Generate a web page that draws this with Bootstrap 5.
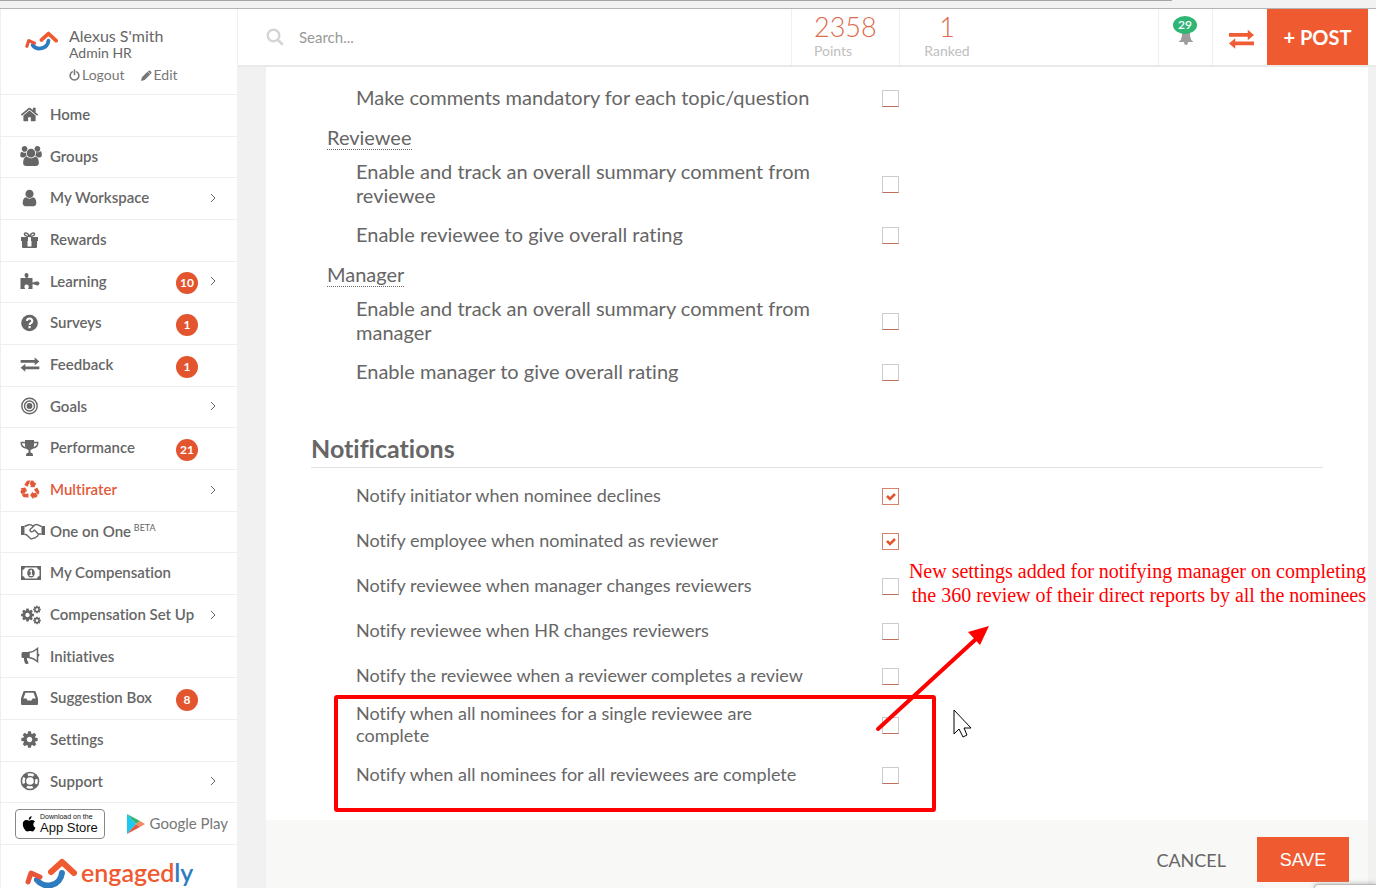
<!DOCTYPE html>
<html lang="en">
<head>
<meta charset="utf-8">
<meta name="viewport" content="width=device-width, initial-scale=1">
<title>Engagedly - Multirater settings</title>
<link href="https://cdn.jsdelivr.net/npm/bootstrap@5.3.0/dist/css/bootstrap.min.css" rel="stylesheet">
<style>
  :root { --brand: #f05a30; --ink: #666; --line: #efefef; }
  body { font-family: Lato, "Liberation Sans", sans-serif; color: var(--ink); background: #f1f1f1; font-size: 15px; font-variant-ligatures: none; }
  a { color: inherit; text-decoration: none; }
  svg { display: block; flex: none; }

  .app-shell { height: 100vh; }
  .window-edge { height: 9px; flex: none; background: #f2f2f2; border-top: 1px solid #a5a5a5; border-bottom: 1px solid #b4b4b4; }
  .window-edge span { display: block; width: 204px; height: 1px; margin: -1px 0 0 auto; background: #f2f2f2; }

  .side { width: 237px; flex: none; background: #fff; border-left: 1px solid var(--line); }
  .profile { height: 85px; padding: 17px 0 0 24px; gap: 11px; }
  .profile > svg { margin-top: 3px; }
  .profile-name { font-size: 16px; line-height: 20px; }
  .profile-role { font-size: 14px; line-height: 14px; }
  .profile-links { font-size: 14px; line-height: 18px; margin-top: 6px; gap: 16px; color: #777; }
  .profile-links a { gap: 2px; }
  .menu { border-top: 1px solid var(--line); }
  .menu li { height: 42px; border-bottom: 1px solid var(--line); }
  .menu li:nth-child(3n+2) { height: 41px; }
  .menu a { height: 100%; padding: 0 20px 2px 19px; font-weight: 600; }
  .menu a.current { color: #e2593a; }
  .menu-icon { width: 30px; flex: none; }
  .menu-icon svg { fill: currentColor; }
  .menu sup { font-size: 9px; font-weight: 400; top: -6px; margin-left: -1px; }
  .count { width: 22px; height: 22px; border-radius: 50%; background: #e2552f; color: #fff; font-size: 12px; line-height: 22px; text-align: center; font-weight: 700; margin: 4px 19px 0 auto; }
  .count.with-chev { margin-right: 11px; }
  .stores { height: 42px; border-bottom: 1px solid var(--line); padding: 0 9px 0 14px; }
  .apple-store { width: 90px; height: 30px; border: 1px solid #888; border-radius: 4px; padding-left: 6px; gap: 4px; color: #111; font-family: "Liberation Sans", Arial, sans-serif; }
  .apple-store small { display: block; font-size: 7px; line-height: 8px; }
  .apple-store b { display: block; font-size: 13px; line-height: 13px; font-weight: 400; }
  .play-store { font-size: 15px; color: #777; gap: 4px; }
  .brand-logo { padding: 12px 0 0 24px; gap: 4px; color: var(--brand); }
  .brand-logo .word { font-size: 25px; line-height: 30px; font-weight: 600; }
  .brand-logo i { font-style: normal; color: #2e7cc0; }

  .topbar { height: 58px; flex: none; background: #fff; border-bottom: 2px solid #e9e9e9; border-left: 1px solid var(--line); }
  .search { padding-left: 28px; gap: 14px; }
  .search input { border: 0; outline: 0; background: none; font-size: 15px; color: #777; width: 300px; padding: 0 1px; }
  .search input::placeholder { color: #999; opacity: 1; }
  .stat { border-left: 1px solid var(--line); padding: 1px 0 0 22px; width: 108px; color: #c0c0c0; font-size: 14px; line-height: 16px; }
  .stat strong { display: block; font-weight: 300; font-size: 27px; line-height: 33px; color: #dd6a4c; }
  .stat.rank { width: 259px; }
  .stat.rank div { width: 50px; text-align: center; }
  .tool { width: 54px; border: 0; border-left: 1px solid var(--line); background: none; padding: 0; }
  .tool.swap { width: 55px; }
  .bell-count { left: 14px; top: 7px; width: 24px; height: 18px; border-radius: 50%; background: #2fb574; color: #fff; font-size: 12px; line-height: 18px; font-weight: 600; }
  .post { width: 101px; margin-right: 8px; border: 0; border-radius: 0; background: var(--brand); color: #fff; font-size: 20px; font-weight: 700; }

  .panel { margin: 0 8px 0 29px; background: #fff; }
  .panel-main { padding: 11px 45px 22px; }
  .topic-row { padding: 7px 0 8px 45px; font-size: 20px; line-height: 24px; }
  .group-title { padding: 8px 0 3px 16px; font-size: 20px; line-height: 24px; font-weight: 400; margin: 0; }
  .group-title span { border-bottom: 1px dotted #666; }
  .opt-label { width: 462px; margin-right: 64px; }
  .tick { appearance: none; flex: none; width: 17px; height: 17px; margin: 2px 0 0; border: 1px solid #ccc; border-bottom: 1px solid #b9705c; border-radius: 0; background: #fff; }
  .tick:checked { border-color: #d9806a; background: url("data:image/svg+xml,%3Csvg xmlns='http://www.w3.org/2000/svg' viewBox='0 0 15 15'%3E%3Cpath d='M4 7l3 3 5-5' fill='none' stroke='%23e0562f' stroke-width='2.6'/%3E%3C/svg%3E"); }
  .notify-title { margin: 41px 0 6px; padding-bottom: 3px; border-bottom: 1px solid #e0e0e0; font-size: 25px; line-height: 32px; font-weight: 700; font-variant-ligatures: none; }
  .notify-row { min-height: 45px; padding: 3px 0 4px 45px; font-size: 18px; line-height: 22px; }
  .notify-row .opt-label { padding-bottom: 3px; }
  .notify-row .tick { margin-top: 0; }
  .panel-foot { background: #f8f8f6; padding: 17px 19px 40px; gap: 31px; }
  .panel-foot .btn { border: 0; border-radius: 0; font-size: 18px; line-height: 24px; padding: 0; }
  .panel-foot .cancel { color: var(--ink); }
  .panel-foot .save { width: 92px; height: 45px; background: var(--brand); color: #fff; font-family: "Liberation Sans", Arial, sans-serif; }

  .marks { left: 68px; top: 500px; color: #f00; }
  .remark { right: 2px; top: 492px; color: #f00; font-family: "Liberation Serif", "Times New Roman", serif; font-size: 20px; line-height: 24px; text-align: right; }
  .tray { right: 0; bottom: 0; width: 62px; height: 4px; background: #fff; border: 1px solid #bbb; border-width: 1px 0 0 1px; border-radius: 4px 0 0 0; box-shadow: 0 0 5px #aaa; }
</style>
</head>
<body>
<svg width="0" height="0" class="position-absolute" aria-hidden="true">
  <symbol id="gear" viewBox="0 0 1792 1792"><path d="M1152 896q0-106-75-181t-181-75-181 75-75 181 75 181 181 75 181-75 75-181zm512-109v222q0 12-8 23t-20 13l-185 28q-19 54-39 91 35 50 107 138 10 12 10 25t-9 23q-27 37-99 108t-94 71q-12 0-26-9l-138-108q-44 23-91 38-16 136-29 186-7 28-36 28h-222q-14 0-24.5-8.5t-11.5-21.5l-28-184q-49-16-90-37l-141 107q-10 9-25 9-14 0-25-11-126-114-165-168-7-10-7-23 0-12 8-23 15-21 51-66.5t54-70.5q-27-50-41-99l-183-27q-13-2-21-12.500t-8-23.500v-222q0-12 8-23t19-13l186-28q14-46 39-92-40-57-107-138-10-12-10-24 0-10 9-23 26-36 98.500-107.500t94.500-71.500q13 0 26 10l138 107q44-23 91-38 16-136 29-186 7-28 36-28h222q14 0 24.500 8.500t11.500 21.500l28 184q49 16 90 37l142-107q9-9 24-9 13 0 25 10 129 119 165 170 7 8 7 22 0 12-8 23-15 21-51 66.500t-54 70.500q26 50 41 98l183 28q13 2 21 12.500t8 23.500z"/></symbol>
  <symbol id="swap" viewBox="0 0 20 16"><path d="M0 3.200h15V.5l5 4.200-5 4.200V6.200H0zM20 13H5v2.700L0 11.500l5-4.200V10h15z"/></symbol>
  <symbol id="swoosh" viewBox="0 0 52 34"><g fill="none" stroke-linecap="round" stroke-linejoin="round"><path d="M12 22a14 14 0 0 0 25-7" stroke="#2e7cc0" stroke-width="6"/><path d="M26 14L37 4l12 11" stroke="#f05a30" stroke-width="6"/><path d="M3 24l3-9 9 4" stroke="#e8553a" stroke-width="5"/></g></symbol>
  <symbol id="chev" viewBox="0 0 8 10"><path d="M2 1l4 4-4 4" fill="none" stroke="#666" stroke-width="1"/></symbol>
  <symbol id="arm" viewBox="0 0 20 20"><path d="M4 5.200L6.300 1.500Q7 .6 8 .6h2.400L7.500 7.200zM11.200 .6h1.300q1 0 1.600.9l1.200 2 1.500-.9-2 5-5.100-.3 1.500-.9-1.700-2.800z"/></symbol>
</svg>

<div class="app-shell d-flex flex-column overflow-hidden position-relative">
  <div class="window-edge"><span></span></div>
  <div class="d-flex flex-grow-1 overflow-hidden">

    <aside class="side overflow-hidden">
      <div class="profile d-flex">
        <svg width="33" height="27" viewBox="0 0 52 42"><use href="#swoosh" width="52" height="34" y="3"/></svg>
        <div>
          <div class="profile-name">Alexus S'mith</div>
          <div class="profile-role">Admin HR</div>
          <div class="profile-links d-flex">
            <a href="#" class="d-flex align-items-center"><svg width="11" height="12" viewBox="0 0 12 13" fill="none" stroke="currentColor" stroke-width="1.700" stroke-linecap="round"><path d="M3.500 3a4.800 4.800 0 1 0 5 0M6 1v5"/></svg>Logout</a>
            <a href="#" class="d-flex align-items-center"><svg width="11" height="11" viewBox="0 0 12 12" fill="currentColor"><path d="M0 12l1-4 6-6 3 3-6 6zM8 1.200Q9 0 10.200 1.200l.8.8q1 1 0 2l-.5.500-3-3z"/></svg>Edit</a>
          </div>
        </div>
      </div>

      <ul class="menu list-unstyled m-0">
        <li><a href="#" class="d-flex align-items-center"><span class="menu-icon"><svg width="19" height="19" viewBox="0 0 1792 1792"><path d="M1472 992v480q0 26-19 45t-45 19h-384v-384h-256v384h-384q-26 0-45-19t-19-45v-480q0-1 .5-3t.5-3l575-474 575 474q1 2 1 6zm223-69l-62 74q-8 9-21 11h-3q-13 0-21-7l-692-577-692 577q-12 8-24 7-13-2-21-11l-62-74q-8-10-7-23.500t11-21.500l719-599q32-26 76-26t76 26l244 204v-195q0-14 9-23t23-9h192q14 0 23 9t9 23v408l219 182q10 8 11 21.500t-7 23.500z"/></svg></span>Home</a></li>
        <li><a href="#" class="d-flex align-items-center"><span class="menu-icon"><svg width="22" height="20" viewBox="0 0 1920 1792"><path d="M593 896q-162 5-265 128h-134q-82 0-138-40.500t-56-118.500q0-353 124-353 6 0 43.500 21t97.500 42.500 119 21.500q67 0 133-23-5 37-5 66 0 159 93 287zm1071 637q0 120-73 189.500t-194 69.500h-874q-121 0-194-69.500t-73-189.500q0-53 3.500-103.500t14-109 26.500-108.500 43-97.500 62-81 85.500-53.500 111.500-20q10 0 43 21.500t73 48 107 48 135 21.500 135-21.500 107-48 73-48 43-21.500q61 0 111.500 20t85.500 53.500 62 81 43 97.500 26.500 108.500 14 109 3.500 103.500zm-1024-1277q0 106-75 181t-181 75-181-75-75-181 75-181 181-75 181 75 75 181zm704 384q0 159-112.500 271.500t-271.500 112.500-271.500-112.500-112.500-271.500 112.500-271.500 271.500-112.500 271.500 112.500 112.500 271.500zm576 225q0 78-56 118.500t-138 40.500h-134q-103-123-265-128 93-128 93-287 0-29-5-66 66 23 133 23 59 0 119-21.500t97.500-42.500 43.500-21q124 0 124 353zm-128-609q0 106-75 181t-181 75-181-75-75-181 75-181 181-75 181 75 75 181z"/></svg></span>Groups</a></li>
        <li><a href="#" class="d-flex align-items-center"><span class="menu-icon"><svg width="19" height="20" viewBox="0 0 1792 1792"><path d="M1536 1399q0 109-62.500 187t-150.500 78h-854q-88 0-150.500-78t-62.500-187q0-85 8.500-160.500t31.500-152 58.500-131 94-89 134.500-34.500q131 128 313 128t313-128q76 0 134.500 34.500t94 89 58.500 131 31.500 152 8.500 160.500zm-256-887q0 159-112.500 271.500t-271.500 112.500-271.500-112.500-112.500-271.500 112.500-271.500 271.500-112.500 271.500 112.500 112.500 271.500z"/></svg></span>My Workspace<svg class="ms-auto" width="8" height="10"><use href="#chev"/></svg></a></li>
        <li><a href="#" class="d-flex align-items-center"><span class="menu-icon"><svg width="19" height="18" viewBox="0 0 19 18"><path d="M1 6h7v4H1zM11 6h7v4h-7zM2 9.500h5.500V17H3q-1 0-1-1zM11.500 9.500H17V16q0 1-1 1h-4.500zM7.500 15.500h4V17h-4z"/><path d="M9.500 5.500C8 2 6 1.500 5 2.200S4 5.500 9.500 5.500zm0 0C11 2 13 1.500 14 2.200s1 3.300-4.500 3.300z" fill="none" stroke="currentColor" stroke-width="1.500"/></svg></span>Rewards</a></li>
        <li><a href="#" class="d-flex align-items-center"><span class="menu-icon"><svg width="20" height="20" viewBox="0 0 20 20"><path d="M1 7h5.500Q5 5.500 5 4q0-2 2-2t2 2q0 1.500-1 3h5v4.500q1.500 0 2.500-.7T18 10.600q2 .2 2 1.900t-2 2q-1.200 0-2.300-.7T13 13.200V18H8.500q.8-1.500.8-2.500 0-2-2.200-2t-2.200 2q0 1 .8 2.500H1z" transform="translate(-.5 0)"/></svg></span>Learning<span class="count with-chev">10</span><svg width="8" height="10"><use href="#chev"/></svg></a></li>
        <li><a href="#" class="d-flex align-items-center"><span class="menu-icon"><svg width="19" height="18" viewBox="0 0 19 18"><circle cx="9.500" cy="9" r="8.300"/><path d="M6.800 6.900Q7.300 4.500 9.600 4.500T12.300 7Q12.300 8.300 11 9T9.600 11" fill="none" stroke="#fff" stroke-width="2.100"/><path d="M8.500 12h2.200v2.200H8.500z" fill="#fff"/></svg></span>Surveys<span class="count">1</span></a></li>
        <li><a href="#" class="d-flex align-items-center"><span class="menu-icon"><svg width="20" height="15"><use href="#swap"/></svg></span>Feedback<span class="count">1</span></a></li>
        <li><a href="#" class="d-flex align-items-center"><span class="menu-icon"><svg width="19" height="18" viewBox="0 0 19 18"><g fill="none" stroke="currentColor" stroke-width="1.400"><circle cx="9.500" cy="9" r="7.700"/><circle cx="9.500" cy="9" r="5"/></g><circle cx="9.500" cy="9" r="2.900"/></svg></span>Goals<svg class="ms-auto" width="8" height="10"><use href="#chev"/></svg></a></li>
        <li><a href="#" class="d-flex align-items-center"><span class="menu-icon"><svg width="19" height="18" viewBox="0 0 19 18"><path d="M5 1h9v5q0 4-3.500 5v2.500q2.500.3 2.500 2.500v1H6v-1q0-2.200 2.500-2.500V11Q5 10 5 6z"/><path d="M5 3.500H1.200Q1 8.500 7 9M14 3.500h3.800q.2 5-5.800 5.500" fill="none" stroke="currentColor" stroke-width="1.400"/></svg></span>Performance<span class="count">21</span></a></li>
        <li><a href="#" class="d-flex align-items-center current"><span class="menu-icon"><svg width="20" height="19" viewBox="0 0 20 20"><use href="#arm" width="20" height="20"/><use href="#arm" width="20" height="20" transform="rotate(120 10 10.500)"/><use href="#arm" width="20" height="20" transform="rotate(240 10 10.500)"/></svg></span>Multirater<svg class="ms-auto" width="8" height="10"><use href="#chev"/></svg></a></li>
        <li><a href="#" class="d-flex align-items-center"><span class="menu-icon"><svg width="26" height="17" viewBox="0 0 26 17"><path d="M1 3h3.500v9H1zM21.500 3H25v9h-3.500z"/><g fill="none" stroke="currentColor" stroke-width="1.400" stroke-linejoin="round"><path d="M4.500 3.500L8 2q2-.8 4 .3l1 .5 2-1q1.500-.5 3 0l3.500 1.700M4.500 11.500h1.700l4 3.800q1.800 1.200 3 0l1-.4q1.700.2 2.300-1.300 1.600-.2 1.600-1.900l1-.7h2.400M18.500 11.300L14.500 7l-1.300 1.200q-1.700 1.300-3-.2-.6-1 .3-2L14 3"/></g></svg></span><span>One on One <sup>BETA</sup></span></a></li>
        <li><a href="#" class="d-flex align-items-center"><span class="menu-icon"><svg width="22" height="16" viewBox="0 0 22 16"><path fill-rule="evenodd" d="M1 1h20v14H1zm4 1.500A3 3 0 0 1 2.500 5v6A3 3 0 0 1 5 13.500h12A3 3 0 0 1 19.500 11V5A3 3 0 0 1 17 2.500z"/><ellipse cx="11" cy="8" rx="3.800" ry="4.500"/><path d="M9.800 6.600l1.500-1V10M9.500 10.300h3.200" fill="none" stroke="#fff" stroke-width="1.200"/></svg></span>My Compensation</a></li>
        <li><a href="#" class="d-flex align-items-center"><span class="menu-icon"><svg width="22" height="20" viewBox="0 0 22 20"><use href="#gear" x="0" y="2.500" width="15" height="15"/><use href="#gear" x="12.500" y="0" width="9" height="9"/><use href="#gear" x="12.500" y="11" width="9" height="9"/></svg></span>Compensation Set Up<svg class="ms-auto" width="8" height="10"><use href="#chev"/></svg></a></li>
        <li><a href="#" class="d-flex align-items-center"><span class="menu-icon"><svg width="20" height="18" viewBox="0 0 20 18"><path d="M3 5h6v6H7q-.5 2 1 3.500 0 1 .8 1.700-1.500 1.200-3.800.3Q3.500 13 4 11H3q-1.500 0-1.500-1.500v-3Q1.500 5 3 5z"/><path d="M9 5.500q4.500-.5 8.500-4v13q-4-3.500-8.500-4z" fill="none" stroke="currentColor" stroke-width="1.500"/><path d="M17.500 6.500q2 0 2 1.500t-2 1.500z"/></svg></span>Initiatives</a></li>
        <li><a href="#" class="d-flex align-items-center"><span class="menu-icon"><svg width="19" height="16" viewBox="0 0 19 16"><path fill-rule="evenodd" d="M4.500 1h10q.8 0 1.200.8L18 8.500V14q0 1-1 1H2q-1 0-1-1V8.500l2.300-6.700Q3.700 1 4.500 1zm1 1.800L3.300 8.500h3.200l1 2h4l1-2h3.200l-2.200-5.700z"/></svg></span>Suggestion Box<span class="count">8</span></a></li>
        <li><a href="#" class="d-flex align-items-center"><span class="menu-icon"><svg width="19" height="19"><use href="#gear"/></svg></span>Settings</a></li>
        <li><a href="#" class="d-flex align-items-center"><span class="menu-icon"><svg width="20" height="20" viewBox="0 0 20 20"><g fill="none" stroke="currentColor"><circle cx="10" cy="10" r="8.600" stroke-width="1.500"/><circle cx="10" cy="10" r="4.500" stroke-width="1.400"/><circle cx="10" cy="10" r="6.500" stroke-width="4" stroke-dasharray="4.200 6.010" stroke-dashoffset="-3"/></g></svg></span>Support<svg class="ms-auto" width="8" height="10"><use href="#chev"/></svg></a></li>
      </ul>

      <div class="stores d-flex align-items-center justify-content-between">
        <a href="#" class="apple-store d-flex align-items-center">
          <svg width="14" height="18" viewBox="0 0 14 18"><path d="M9.500 1q.2 1.700-.8 2.800T6.800 4.700Q6.600 3.200 7.500 2.200T9.500 1zM7.200 5.700Q8.500 5 10 5q2 .1 3 1.500-1.800 1-1.700 3.200.1 2.200 2.100 3-1.200 3.700-3.200 3.800-.8 0-1.500-.4t-1.500 0-1.600.4Q3.500 16.400 2 13.500T.8 8.600Q1.300 5 4.300 4.900q.8 0 1.500.4t1.400.4z"/></svg>
          <span><small>Download on the</small><b>App Store</b></span>
        </a>
        <a href="#" class="play-store d-flex align-items-center">
          <svg width="20" height="22" viewBox="0 0 20 22"><path d="M1 1l9 10-9 10z" fill="#1cc8f0"/><path d="M1 1l13 7-4 3z" fill="#35b473"/><path d="M1 21l13-7-4-3z" fill="#e05a44"/><path d="M14 8l5 3-5 3-4-3z" fill="#f08a60"/></svg>
          Google Play
        </a>
      </div>
      <a href="#" class="brand-logo d-flex">
        <svg width="52" height="36" viewBox="0 0 52 34"><use href="#swoosh"/></svg>
        <span class="word">engaged<i>ly</i></span>
      </a>
    </aside>

    <div class="flex-grow-1 d-flex flex-column overflow-hidden">
      <header class="topbar d-flex">
        <div class="search d-flex align-items-center flex-grow-1">
          <svg width="18" height="18" viewBox="0 0 18 18" fill="none" stroke="#d5d5d5" stroke-linecap="round"><circle cx="7.500" cy="7.500" r="5.800" stroke-width="2.400"/><path d="M12 12l4 4" stroke-width="2.600"/></svg>
          <input type="text" placeholder="Search..." aria-label="Search">
        </div>
        <div class="stat"><strong>2358</strong>Points</div>
        <div class="stat rank"><div><strong>1</strong>Ranked</div></div>
        <button type="button" class="tool position-relative" aria-label="Notifications">
          <svg class="mx-auto" width="18" height="18" viewBox="0 0 18 18"><path d="M5 1h8v7q.5 4 3.500 6H11q0 3-2 3t-2-3H1.500Q4.500 12 5 8z" fill="#a09c9c"/></svg>
          <span class="bell-count position-absolute">29</span>
        </button>
        <button type="button" class="tool swap" aria-label="Switch view"><svg class="ms-3 mt-1" width="25" height="20" fill="#ef5c35"><use href="#swap"/></svg></button>
        <button type="button" class="post">+ POST</button>
      </header>

      <main class="panel position-relative flex-grow-1">
        <form>
          <div class="panel-main">
            <div class="topic-row d-flex align-items-center"><label class="opt-label" for="t1">Make comments mandatory for each topic/question</label><input class="tick" type="checkbox" id="t1"></div>
            <h3 class="group-title"><span>Reviewee</span></h3>
            <div class="topic-row d-flex align-items-center"><label class="opt-label" for="t2">Enable and track an overall summary comment from reviewee</label><input class="tick" type="checkbox" id="t2"></div>
            <div class="topic-row d-flex align-items-center"><label class="opt-label" for="t3">Enable reviewee to give overall rating</label><input class="tick" type="checkbox" id="t3"></div>
            <h3 class="group-title"><span>Manager</span></h3>
            <div class="topic-row d-flex align-items-center"><label class="opt-label" for="t4">Enable and track an overall summary comment from manager</label><input class="tick" type="checkbox" id="t4"></div>
            <div class="topic-row d-flex align-items-center"><label class="opt-label" for="t5">Enable manager to give overall rating</label><input class="tick" type="checkbox" id="t5"></div>

            <h2 class="notify-title">Notifications</h2>
            <div class="notify-row d-flex align-items-center"><label class="opt-label" for="n1">Notify initiator when nominee declines</label><input class="tick" type="checkbox" id="n1" checked></div>
            <div class="notify-row d-flex align-items-center"><label class="opt-label" for="n2">Notify employee when nominated as reviewer</label><input class="tick" type="checkbox" id="n2" checked></div>
            <div class="notify-row d-flex align-items-center"><label class="opt-label" for="n3">Notify reviewee when manager changes reviewers</label><input class="tick" type="checkbox" id="n3"></div>
            <div class="notify-row d-flex align-items-center"><label class="opt-label" for="n4">Notify reviewee when HR changes reviewers</label><input class="tick" type="checkbox" id="n4"></div>
            <div class="notify-row d-flex align-items-center"><label class="opt-label" for="n5">Notify the reviewee when a reviewer completes a review</label><input class="tick" type="checkbox" id="n5"></div>
            <div class="notify-row d-flex align-items-center"><label class="opt-label" for="n6">Notify when all nominees for a single reviewee are complete</label><input class="tick" type="checkbox" id="n6"></div>
            <div class="notify-row d-flex align-items-center"><label class="opt-label" for="n7">Notify when all nominees for all reviewees are complete</label><input class="tick" type="checkbox" id="n7"></div>
          </div>
          <div class="panel-foot d-flex justify-content-end align-items-center">
            <button type="button" class="btn cancel">CANCEL</button>
            <button type="submit" class="btn save">SAVE</button>
          </div>
        </form>

        <svg class="marks position-absolute pe-none" width="660" height="260" viewBox="0 0 660 260" aria-hidden="true">
          <rect x="2" y="130" width="598" height="113" rx="1" fill="none" stroke="#f00" stroke-width="4"/>
          <path d="M544 162L642 72" stroke="#f00" stroke-width="4" stroke-linecap="round"/>
          <path d="M655 59l-9 19-12-13z" fill="#f00"/>
          <path d="M620 143v24l5-5 4 8 4-2-3-7h7z" fill="#fff" stroke="#000" stroke-width="1"/>
        </svg>
        <div class="remark position-absolute">New settings added for notifying manager on completing<br>the 360 review of their direct reports by all the nominees</div>
      </main>
    </div>
  </div>
  <div class="tray position-absolute"></div>
</div>
<script src="https://cdn.jsdelivr.net/npm/bootstrap@5.3.0/dist/js/bootstrap.bundle.min.js"></script>
</body>
</html>
